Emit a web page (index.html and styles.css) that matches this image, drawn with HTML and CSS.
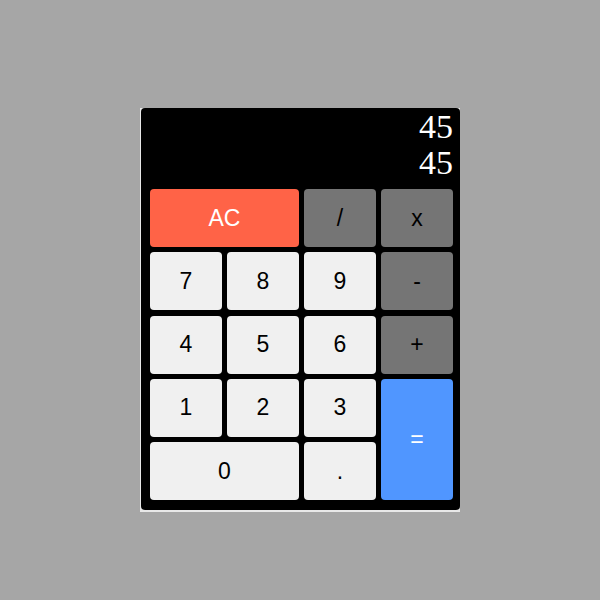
FILE: index.html
```html
<!DOCTYPE html>
<html>
<head>
<meta charset="utf-8">
<link rel="stylesheet" href="styles.css">
</head>
<body>
<div class="frame">
  <div class="calc">
    <div class="display">
      <div class="line">45</div>
      <div class="line">45</div>
    </div>
    <div class="keys">
      <button class="key red span2">AC</button>
      <button class="key gray">/</button>
      <button class="key gray">x</button>
      <button class="key">7</button>
      <button class="key">8</button>
      <button class="key">9</button>
      <button class="key gray">-</button>
      <button class="key">4</button>
      <button class="key">5</button>
      <button class="key">6</button>
      <button class="key gray">+</button>
      <button class="key">1</button>
      <button class="key">2</button>
      <button class="key">3</button>
      <button class="key blue tall">=</button>
      <button class="key span2">0</button>
      <button class="key">.</button>
    </div>
  </div>
</div>
</body>
</html>
```
FILE: styles.css
```css
html, body {
  margin: 0;
  padding: 0;
}
body {
  background: #a6a6a6;
  width: 600px;
  height: 600px;
  display: flex;
  justify-content: center;
  align-items: flex-start;
  padding-top: 108px;
  box-sizing: border-box;
}
.frame {
  width: 320px;
  background: #e8e8e8;
  padding: 0 0 2px 1px;
  box-sizing: border-box;
}
.calc {
  background: #000;
  border-radius: 4px;
  padding: 1px 6px 10px 9px;
}
.display {
  color: #fff;
  font-family: "Liberation Serif", "Times New Roman", serif;
  font-size: 34px;
  line-height: 36px;
  text-align: right;
  padding-right: 1px;
  margin-bottom: 8px;
}
.keys {
  display: grid;
  grid-template-columns: repeat(4, 72px);
  grid-auto-rows: 58px;
  column-gap: 5px;
  row-gap: 5.25px;
}
.key {
  border: none;
  border-radius: 4px;
  background: #f0f0f0;
  color: #000;
  font-family: "Liberation Sans", Arial, sans-serif;
  font-size: 23px;
  padding: 0;
  margin: 0;
}
.span2 {
  grid-column: span 2;
}
.tall {
  grid-row: span 2;
}
.red {
  background: #ff6347;
  color: #fff;
}
.gray {
  background: #757575;
}
.blue {
  background: #5096ff;
  color: #fff;
}
```
